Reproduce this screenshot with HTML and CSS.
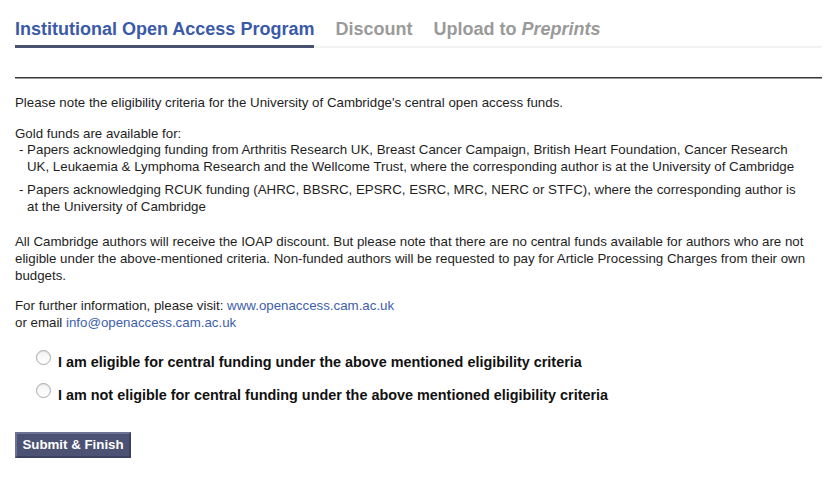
FILE: index.html
```html
<!DOCTYPE html>
<html>
<head>
<meta charset="utf-8">
<link rel="stylesheet" href="styles.css">
</head>
<body>
<div class="page">
  <nav class="tabs">
    <span class="tab active">Institutional Open Access Program</span>
    <span class="tab">Discount</span>
    <span class="tab">Upload to <em>Preprints</em></span>
  </nav>
  <hr class="rule">
  <div class="content">
    <p>Please note the eligibility criteria for the University of Cambridge's central open access funds.</p>
    <p class="tight">Gold funds are available for:</p>
    <ul class="funds">
      <li>- Papers acknowledging funding from Arthritis Research UK, Breast Cancer Campaign, British Heart Foundation, Cancer Research UK, Leukaemia &amp; Lymphoma Research and the Wellcome Trust, where the corresponding author is at the University of Cambridge</li>
      <li>- Papers acknowledging RCUK funding (AHRC, BBSRC, EPSRC, ESRC, MRC, NERC or STFC), where the corresponding author is at the University of Cambridge</li>
    </ul>
    <p>All Cambridge authors will receive the IOAP discount. But please note that there are no central funds available for authors who are not eligible under the above-mentioned criteria. Non-funded authors will be requested to pay for Article Processing Charges from their own budgets.</p>
    <p>For further information, please visit: <a href="#">www.openaccess.cam.ac.uk</a><br>or email <a href="#">info@openaccess.cam.ac.uk</a></p>
    <div class="choices">
      <label class="choice"><input type="radio" name="elig" class="radio"><span>I am eligible for central funding under the above mentioned eligibility criteria</span></label>
      <label class="choice"><input type="radio" name="elig" class="radio"><span>I am not eligible for central funding under the above mentioned eligibility criteria</span></label>
    </div>
    <button class="submit" type="button">Submit &amp; Finish</button>
  </div>
</div>
</body>
</html>
```
FILE: styles.css
```css
html, body {
  margin: 0;
  padding: 0;
  background: #fff;
}
body {
  font-family: "Liberation Sans", Arial, sans-serif;
  color: #1e1e1e;
}
.page {
  padding: 0 14px 0 15px;
}
.tabs {
  display: flex;
  gap: 21px;
  margin-top: 19px;
  border-bottom: 2px solid #f2f2f2;
}
.tab {
  font-size: 18px;
  font-weight: bold;
  line-height: 21px;
  color: #9a9a9a;
  padding-bottom: 5px;
  margin-bottom: -2px;
  border-bottom: 3px solid transparent;
}
.tab em {
  font-style: italic;
}
.tab.active {
  color: #3a5aa8;
  border-bottom-color: #4a5070;
}
.rule {
  margin: 29px 0 0 0;
  border: 0;
  border-top: 1px solid #3a3a3a;
  border-bottom: 1px solid #9a9a9a;
  height: 0;
}
.content {
  padding-right: 16px;
  font-size: 13.3px;
  line-height: 16.7px;
}
.content p {
  margin: 14px 0 0 0;
}
.content p:first-child {
  margin-top: 16px;
}
.content a {
  color: #3d5eab;
  text-decoration: none;
}
.funds {
  list-style: none;
  margin: 0 0 19px 0;
  padding: 0;
}
.funds li {
  padding-left: 12px;
  text-indent: -8px;
  margin-bottom: 6px;
}
.funds li:last-child {
  margin-bottom: 0;
}
.content .funds + p {
  margin-top: 19px;
}
.choices {
  display: flex;
  flex-direction: column;
  gap: 14px;
  margin-top: 21px;
  padding-left: 21px;
}
.choice {
  display: flex;
  align-items: flex-start;
  gap: 7px;
  font-size: 14.4px;
  font-weight: bold;
  line-height: 19.5px;
  color: #111;
}
.radio {
  appearance: none;
  -webkit-appearance: none;
  width: 15px;
  height: 15px;
  margin: -3px 0 0 0;
  border-radius: 50%;
  border: 1px solid #a8a8a8;
  background: linear-gradient(#f4f4f4, #ffffff);
  box-shadow: inset 0 1px 1px rgba(0,0,0,0.08);
  flex: none;
}
.submit {
  margin-top: 26px;
  display: block;
  width: 116px;
  height: 26px;
  padding: 0;
  font-family: "Liberation Sans", Arial, sans-serif;
  font-size: 13.3px;
  font-weight: bold;
  color: #fff;
  background: #4b5274;
  border: 2px solid;
  border-color: #6c7292 #3c4160 #3c4160 #6c7292;
}
```
